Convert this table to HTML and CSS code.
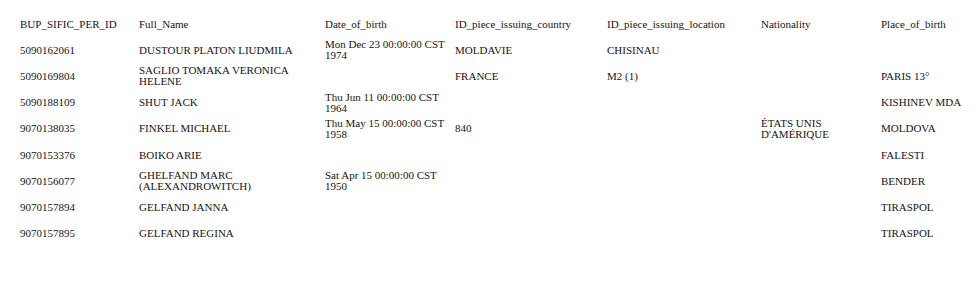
FILE: index.html
```html
<!DOCTYPE HTML>
<html>
    <head>
        <title>Persons</title>
        <meta name="viewport" content="width=device-width, initial-scale=1">
        <link rel="stylesheet" href="styles.css">
    </head>
    <body>
        <table class="grid">
            <colgroup>
                <col class="c-id">
                <col class="c-name">
                <col class="c-dob">
                <col class="c-country">
                <col class="c-location">
                <col class="c-nat">
                <col class="c-pob">
            </colgroup>
            <thead>
                <tr>
                    <th>BUP_SIFIC_PER_ID</th>
                    <th>Full_Name</th>
                    <th>Date_of_birth</th>
                    <th>ID_piece_issuing_country</th>
                    <th>ID_piece_issuing_location</th>
                    <th>Nationality</th>
                    <th>Place_of_birth</th>
                </tr>
            </thead>
            <tbody>
                <tr>
                    <td>5090162061</td>
                    <td>DUSTOUR PLATON LIUDMILA</td>
                    <td>Mon Dec 23 00:00:00 CST 1974</td>
                    <td>MOLDAVIE</td>
                    <td>CHISINAU</td>
                    <td></td>
                    <td></td>
                </tr>
                <tr>
                    <td>5090169804</td>
                    <td>SAGLIO TOMAKA VERONICA HELENE</td>
                    <td></td>
                    <td>FRANCE</td>
                    <td>M2 (1)</td>
                    <td></td>
                    <td>PARIS 13°</td>
                </tr>
                <tr>
                    <td>5090188109</td>
                    <td>SHUT JACK</td>
                    <td>Thu Jun 11 00:00:00 CST 1964</td>
                    <td></td>
                    <td></td>
                    <td></td>
                    <td>KISHINEV MDA</td>
                </tr>
                <tr>
                    <td>9070138035</td>
                    <td>FINKEL MICHAEL</td>
                    <td>Thu May 15 00:00:00 CST 1958</td>
                    <td>840</td>
                    <td></td>
                    <td>ÉTATS UNIS D'AMÉRIQUE</td>
                    <td>MOLDOVA</td>
                </tr>
                <tr>
                    <td>9070153376</td>
                    <td>BOIKO ARIE</td>
                    <td></td>
                    <td></td>
                    <td></td>
                    <td></td>
                    <td>FALESTI</td>
                </tr>
                <tr>
                    <td>9070156077</td>
                    <td>GHELFAND MARC (ALEXANDROWITCH)</td>
                    <td>Sat Apr 15 00:00:00 CST 1950</td>
                    <td></td>
                    <td></td>
                    <td></td>
                    <td>BENDER</td>
                </tr>
                <tr>
                    <td>9070157894</td>
                    <td>GELFAND JANNA</td>
                    <td></td>
                    <td></td>
                    <td></td>
                    <td></td>
                    <td>TIRASPOL</td>
                </tr>
                <tr>
                    <td>9070157895</td>
                    <td>GELFAND REGINA</td>
                    <td></td>
                    <td></td>
                    <td></td>
                    <td></td>
                    <td>TIRASPOL</td>
                </tr>
            </tbody>
        </table>
    </body>
</html>
```
FILE: styles.css
```css
html {font-family: "Liberation Serif", "Times New Roman", serif; font-size: 11px; color: #151515;}
body {margin: 0; padding: 11px 0 0 20px; background: #fff;}
.grid {border-collapse: collapse; table-layout: fixed; width: 957px;}
.grid th, .grid td { padding: 0 5px 0 0; line-height: 11px; text-align: left; vertical-align: middle; font-weight: normal; }
.grid th { height: 26px; }
.grid td { height: 26.25px; }
.c-id { width: 119px; }
.c-name { width: 186px; }
.c-dob { width: 130px; }
.c-country { width: 152px; }
.c-location { width: 154px; }
.c-nat { width: 120px; }
.c-pob { width: 96px; }
```
